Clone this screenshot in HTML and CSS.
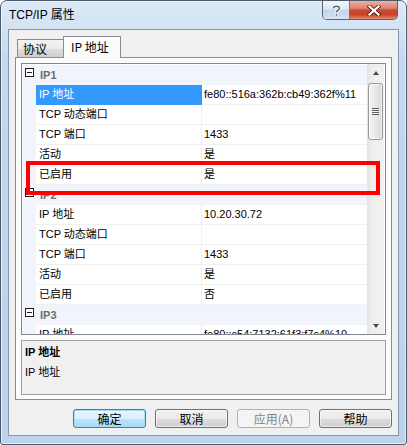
FILE: index.html
```html
<!DOCTYPE html>
<html lang="zh-CN">
<head>
<meta charset="utf-8">
<title>TCP/IP 属性</title>
<link rel="stylesheet" href="styles.css">
</head>
<body>
<div class="window">
  <div class="titlebar">
    <span class="title">TCP/IP 属性</span>
    <div class="caption">
      <div class="cb-help">
        <svg width="11" height="13" viewBox="0 0 11 13">
          <path d="M2.5 4.2 C2.5 1.8 8.5 1.5 8.5 4.2 C8.5 6.2 5.5 6 5.5 8.3" fill="none" stroke="#fff" stroke-width="3.4"/>
          <path d="M2.5 4.2 C2.5 1.8 8.5 1.5 8.5 4.2 C8.5 6.2 5.5 6 5.5 8.3" fill="none" stroke="#56657a" stroke-width="1.6"/>
          <rect x="4.2" y="9.5" width="2.6" height="2.6" fill="#56657a" stroke="#fff" stroke-width="0.8"/>
        </svg>
      </div>
      <div class="cb-close">
        <svg width="14" height="11" viewBox="0 0 14 11">
          <path d="M2.5 1.5 L11.5 9.5 M11.5 1.5 L2.5 9.5" stroke="#5a2a22" stroke-width="4" stroke-linecap="square"/>
          <path d="M2.5 1.5 L11.5 9.5 M11.5 1.5 L2.5 9.5" stroke="#fff" stroke-width="2.2" stroke-linecap="square"/>
        </svg>
      </div>
    </div>
  </div>
  <div class="client">
    <div class="tabs">
      <div class="tab">协议</div>
      <div class="tab tab-active">IP 地址</div>
    </div>
    <div class="panel">
      <div class="grid">
        <div class="rows">
          <div class="cat"><span class="toggle"></span><span class="cat-label">IP1</span></div>
          <div class="row selected"><span class="gutter"></span><span class="label">IP 地址</span><span class="value">fe80::516a:362b:cb49:362f%11</span></div>
          <div class="row"><span class="gutter"></span><span class="label">TCP 动态端口</span><span class="value"></span></div>
          <div class="row"><span class="gutter"></span><span class="label">TCP 端口</span><span class="value">1433</span></div>
          <div class="row"><span class="gutter"></span><span class="label">活动</span><span class="value">是</span></div>
          <div class="row"><span class="gutter"></span><span class="label">已启用</span><span class="value">是</span></div>
          <div class="cat"><span class="toggle"></span><span class="cat-label">IP2</span></div>
          <div class="row"><span class="gutter"></span><span class="label">IP 地址</span><span class="value">10.20.30.72</span></div>
          <div class="row"><span class="gutter"></span><span class="label">TCP 动态端口</span><span class="value"></span></div>
          <div class="row"><span class="gutter"></span><span class="label">TCP 端口</span><span class="value">1433</span></div>
          <div class="row"><span class="gutter"></span><span class="label">活动</span><span class="value">是</span></div>
          <div class="row"><span class="gutter"></span><span class="label">已启用</span><span class="value">否</span></div>
          <div class="cat"><span class="toggle"></span><span class="cat-label">IP3</span></div>
          <div class="row"><span class="gutter"></span><span class="label">IP 地址</span><span class="value">fe80::c54:7132:61f3:f7c4%10</span></div>
        </div>
        <div class="scrollbar">
          <div class="sb-btn"><span class="arrow-up"></span></div>
          <div class="thumb"><span class="grip"></span></div>
          <div class="sb-track"></div>
          <div class="sb-btn"><span class="arrow-down"></span></div>
        </div>
        <div class="highlight"></div>
      </div>
      <div class="desc">
        <div class="desc-title">IP 地址</div>
        <div class="desc-text">IP 地址</div>
      </div>
    </div>
    <div class="buttons">
      <div class="btn btn-default">确定</div>
      <div class="btn">取消</div>
      <div class="btn btn-disabled">应用(A)</div>
      <div class="btn">帮助</div>
    </div>
  </div>
</div>
</body>
</html>
```
FILE: styles.css
```css
* { box-sizing: border-box; }
html, body { margin: 0; padding: 0; }
body {
  width: 407px;
  height: 445px;
  overflow: hidden;
  background: #ffffff;
  font-family: "Liberation Sans", "Noto Sans CJK SC", sans-serif;
  font-size: 11px;
  color: #000;
}

.window {
  width: 407px;
  height: 445px;
  border: 1px solid #4d5b6d;
  border-radius: 7px 7px 3px 3px;
  background: linear-gradient(180deg, #dce9f7 0px, #d2e3f4 28px, #c4d8ee 60px, #bcd3ec 100%);
  box-shadow: inset 0 0 0 1px rgba(255, 255, 255, 0.55);
  padding: 0 7px 8px 7px;
  display: flex;
  flex-direction: column;
}

.titlebar {
  height: 29px;
  display: flex;
  align-items: flex-start;
}
.title {
  flex: 1;
  font-size: 12px;
  line-height: 15px;
  padding: 7px 0 0 1px;
  color: #000;
}
.caption {
  display: flex;
  height: 19px;
  margin-right: 1px;
  border: 1px solid #566478;
  border-top: none;
  border-radius: 0 0 5px 5px;
  overflow: hidden;
}
.cb-help {
  width: 27px;
  border-right: 1px solid #6d7a8c;
  background: linear-gradient(180deg, #f1f6fc 0%, #dde8f4 45%, #c6d6e9 50%, #cddcee 85%, #dbe7f4 100%);
  display: flex;
  align-items: center;
  justify-content: center;
}
.cb-close {
  width: 47px;
  background: linear-gradient(180deg, #eab1a4 0%, #dd8572 40%, #c94a33 50%, #c5432c 75%, #e18a6c 100%);
  display: flex;
  align-items: center;
  justify-content: center;
}

.client {
  flex: 1;
  background: #f0f0f0;
  border: 1px solid #8796a8;
  padding: 6px 6px 7px 6px;
  display: flex;
  flex-direction: column;
}

.tabs {
  height: 21px;
  display: flex;
  align-items: flex-end;
  padding-left: 2px;
  position: relative;
  z-index: 1;
}
.tab {
  width: 47px;
  height: 18px;
  padding-left: 5px;
  border: 1px solid #898c95;
  border-bottom: none;
  background: linear-gradient(180deg, #f3f3f3 0%, #ebebeb 50%, #dedede 50%, #cfcfcf 100%);
  font-size: 12px;
  line-height: 17px;
  font-family: "Noto Sans CJK SC", sans-serif;
}
.tab-active {
  width: 58px;
  height: 22px;
  margin-left: -1px;
  margin-bottom: -1px;
  padding-left: 7px;
  background: #fcfcfc;
  line-height: 20px;
}

.panel {
  height: 343px;
  border: 1px solid #898c95;
  background: #fcfcfc;
  padding: 5px 5px 4px 5px;
  display: flex;
  flex-direction: column;
  gap: 5px;
}

.grid {
  position: relative;
  height: 272px;
  border: 1px solid #828790;
  background: #ffffff;
  display: flex;
}
.rows {
  width: 345px;
  padding-top: 1px;
  overflow: hidden;
}
.cat {
  display: flex;
  align-items: flex-start;
  height: 20px;
  background: #f1f5fb;
}
.toggle {
  position: relative;
  width: 9px;
  height: 9px;
  margin: 3px 0 0 3px;
  border: 1px solid #1e1e1e;
  background: #ffffff;
}
.toggle::after {
  content: "";
  position: absolute;
  left: 1px;
  top: 3px;
  width: 5px;
  height: 1px;
  background: #1e1e1e;
}
.cat-label {
  margin-left: 6px;
  line-height: 20px;
  font-weight: bold;
  color: #6d6d6d;
}
.row {
  display: flex;
  height: 20px;
}
.gutter {
  width: 14px;
  background: #f1f5fb;
}
.label {
  width: 166px;
  padding-left: 3px;
  line-height: 19px;
  border-right: 1px solid #f0f0f0;
  border-bottom: 1px solid #f0f0f0;
  white-space: nowrap;
}
.value {
  width: 165px;
  padding-left: 2px;
  line-height: 19px;
  border-bottom: 1px solid #f0f0f0;
  white-space: nowrap;
  overflow: hidden;
}
.selected .label {
  background: #3399ff;
  color: #ffffff;
  border-bottom-color: #3399ff;
  border-right-color: #3399ff;
}

.scrollbar {
  width: 17px;
  display: flex;
  flex-direction: column;
  align-items: center;
  background: linear-gradient(90deg, #e4e4e4 0%, #eeeeee 30%, #f1f1f1 100%);
}
.sb-btn {
  height: 17px;
  width: 17px;
  display: flex;
  align-items: center;
  justify-content: center;
}
.arrow-up, .arrow-down {
  width: 0;
  height: 0;
  border-left: 3.5px solid transparent;
  border-right: 3.5px solid transparent;
}
.arrow-up { border-bottom: 4px solid #4a4a4a; }
.arrow-down { border-top: 4px solid #4a4a4a; }
.thumb {
  margin-top: 2px;
  width: 15px;
  height: 57px;
  border: 1px solid #979797;
  border-radius: 3px;
  background: linear-gradient(90deg, #f4f4f4 0%, #e8e8e8 50%, #d8d8d8 100%);
  box-shadow: inset 0 0 0 1px rgba(255, 255, 255, 0.7);
  display: flex;
  align-items: center;
  justify-content: center;
}
.grip {
  width: 7px;
  height: 7px;
  background: repeating-linear-gradient(180deg, #5e5e5e 0px, #5e5e5e 1px, #f2f2f2 1px, #f2f2f2 2px);
}
.sb-track { flex: 1; }

.highlight {
  position: absolute;
  left: 4px;
  top: 97px;
  width: 354px;
  height: 34px;
  border: 4px solid #ff0000;
}

.desc {
  height: 55px;
  border: 1px solid #a0a0a0;
  background: #f0f0f0;
  padding: 3px 0 0 3px;
}
.desc-title {
  font-weight: bold;
  line-height: 16px;
}
.desc-text {
  margin-top: 4px;
  line-height: 16px;
}

.buttons {
  margin-top: 9px;
  display: flex;
  justify-content: flex-end;
  gap: 9px;
}
.btn {
  width: 73px;
  height: 19px;
  border: 1px solid #707070;
  border-radius: 3px;
  background: linear-gradient(180deg, #f2f2f2 0%, #ebebeb 50%, #dddddd 50%, #cfcfcf 100%);
  box-shadow: inset 0 0 0 1px rgba(255, 255, 255, 0.6);
  text-align: center;
  font-size: 12px;
  line-height: 17px;
  font-family: "Noto Sans CJK SC", sans-serif;
}
.btn-default {
  border-color: #3c7fb1;
  background: linear-gradient(180deg, #eaf6fd 0%, #d9f0fc 50%, #bee6fd 50%, #a7d9f5 100%);
  box-shadow: inset 0 0 0 1px #a6dcf5;
}
.btn-disabled {
  border-color: #adb2b5;
  background: #f4f4f4;
  color: #838383;
  box-shadow: none;
}
```
